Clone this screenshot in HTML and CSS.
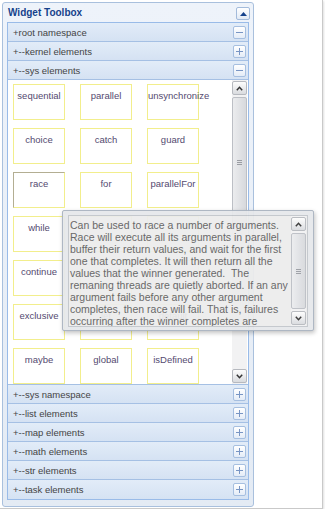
FILE: index.html
```html
<!DOCTYPE html>
<html lang="en">
<head>
    <meta charset="UTF-8">
    <title>Widget Toolbox</title>
    <link rel="stylesheet" href="styles.css">
</head>
<body>

    <div class="frame">
        <div class="toolbox">
            <div class="toolbox-head">
                <span class="title">Widget Toolbox</span>
                <span class="head-btn">
                    <svg width="7" height="4" viewBox="0 0 7 4"><path d="M0 4 L3.5 0 L7 4 Z" fill="#15428b"/></svg>
                </span>
            </div>

            <div class="toolbox-body">
                <div class="section">+root namespace <span class="sec-btn minus"></span></div>
                <div class="section">+--kernel elements <span class="sec-btn plus"></span></div>
                <div class="section">+--sys elements <span class="sec-btn minus"></span></div>

                <div class="palette">
                    <div class="grid">
                        <div class="box">sequential</div>
                        <div class="box">parallel</div>
                        <div class="box">unsynchronize</div>
                        <div class="box">choice</div>
                        <div class="box">catch</div>
                        <div class="box">guard</div>
                        <div class="box active">race</div>
                        <div class="box">for</div>
                        <div class="box">parallelFor</div>
                        <div class="box">while</div>
                        <div class="box"></div>
                        <div class="box"></div>
                        <div class="box">continue</div>
                        <div class="box"></div>
                        <div class="box"></div>
                        <div class="box">exclusive</div>
                        <div class="box">let</div>
                        <div class="box">default</div>
                        <div class="box">maybe</div>
                        <div class="box">global</div>
                        <div class="box">isDefined</div>
                    </div>
                    <div class="vscroll">
                        <span class="sb-btn"><svg width="7" height="5" viewBox="0 0 7 5"><path d="M0.8 4.2 L3.5 1.3 L6.2 4.2" fill="none" stroke="#333" stroke-width="1.5"/></svg></span>
                        <span class="sb-thumb tall"><i></i><i></i><i></i></span>
                        <span class="sb-track"></span>
                        <span class="sb-btn"><svg width="7" height="5" viewBox="0 0 7 5"><path d="M0.8 0.8 L3.5 3.7 L6.2 0.8" fill="none" stroke="#333" stroke-width="1.5"/></svg></span>
                    </div>
                </div>

                <div class="section">+--sys namespace <span class="sec-btn plus"></span></div>
                <div class="section">+--list elements <span class="sec-btn plus"></span></div>
                <div class="section">+--map elements <span class="sec-btn plus"></span></div>
                <div class="section">+--math elements <span class="sec-btn plus"></span></div>
                <div class="section">+--str elements <span class="sec-btn plus"></span></div>
                <div class="section">+--task elements <span class="sec-btn plus"></span></div>
            </div>
        </div>

        <!-- tooltip for the hovered "race" widget -->
        <div class="tip">
            <div class="tip-area">
                <div class="tip-text">Can be used to race a number of arguments.<br>
Race will execute all its arguments in parallel,<br>
buffer their return values, and wait for the first<br>
one that completes. It will then return all the<br>
values that the winner generated.&nbsp; The<br>
remaning threads are quietly aborted. If an any<br>
argument fails before any other argument<br>
completes, then race will fail. That is, failures<br>
occurring after the winner completes are<br>
silently ignored.</div>
                <div class="vscroll">
                    <span class="sb-btn"><svg width="7" height="5" viewBox="0 0 7 5"><path d="M0.8 4.2 L3.5 1.3 L6.2 4.2" fill="none" stroke="#333" stroke-width="1.5"/></svg></span>
                    <span class="sb-thumb fill"><i></i><i></i><i></i></span>
                    <span class="sb-btn"><svg width="7" height="5" viewBox="0 0 7 5"><path d="M0.8 0.8 L3.5 3.7 L6.2 0.8" fill="none" stroke="#333" stroke-width="1.5"/></svg></span>
                </div>
            </div>
        </div>
    </div>

</body>
</html>
```

FILE: styles.css
```css
body {
    margin: 0;
    font-family: "Liberation Sans", Arial, sans-serif;
    background-color: #fff;
}
.frame {
    position: relative;
    width: 323px;
    height: 509px;
    padding: 2px;
    box-sizing: border-box;
    border-right: 1px solid #c9c9c9;
    border-bottom: 1px solid #c9c9c9;
    box-shadow: 1px 1px 2px rgba(0, 0, 0, 0.12);
}
.toolbox {
    width: 252px;
    border: 1px solid #a9c0dd;
    border-radius: 3px;
    background: linear-gradient(#eef3fa, #e4ebf4);
    padding: 0 4px 6px 4px;
    box-sizing: border-box;
}
.toolbox-head {
    height: 19px;
    display: flex;
    align-items: center;
    justify-content: space-between;
    padding: 0 0 0 1px;
}
.title {
    font-size: 10px;
    font-weight: bold;
    color: #15428b;
}
.head-btn {
    width: 12px;
    height: 11px;
    margin-right: -1px;
    margin-top: 2px;
    border: 1px solid #a3bbdb;
    border-radius: 2px;
    background: linear-gradient(#ffffff, #e2eaf5);
    display: flex;
    align-items: center;
    justify-content: center;
}
.toolbox-body {
    border: 1px solid #99bbe8;
    background-color: #fff;
}
.section {
    height: 18px;
    border-bottom: 1px solid #a5c0e4;
    background: linear-gradient(#e2ecf8, #d5e2f3);
    display: flex;
    align-items: center;
    justify-content: space-between;
    padding: 0 2px 0 5px;
    font-size: 9.5px;
    color: #444;
}
.section:last-child {
    border-bottom: none;
    height: 19px;
}
.sec-btn {
    position: relative;
    width: 11px;
    height: 11px;
    border: 1px solid #a6bfe0;
    border-radius: 2px;
    background: linear-gradient(#ffffff, #e4ecf7);
}
.sec-btn::before,
.sec-btn.plus::after {
    content: "";
    position: absolute;
    background-color: #7895c4;
}
.sec-btn::before {
    left: 2px;
    right: 2px;
    top: 5px;
    height: 1px;
}
.sec-btn.plus::after {
    top: 2px;
    bottom: 2px;
    left: 5px;
    width: 1px;
}
.palette {
    height: 304px;
    display: flex;
    border-bottom: 1px solid #a5c0e4;
    background-color: #fff;
}
.grid {
    flex: 1;
    overflow: hidden;
    padding: 4px 0 0 5px;
    display: grid;
    grid-template-columns: repeat(3, 52px);
    grid-auto-rows: 36px;
    column-gap: 15px;
    row-gap: 8px;
}
.box {
    border: 1px solid #f2ee8c;
    box-sizing: border-box;
    text-align: center;
    font-size: 9.5px;
    color: #544a70;
    padding-top: 5px;
    white-space: nowrap;
}
.box.active {
    border-color: #b3ae92 #f2ee8c #f2ee8c #b3ae92;
}
.vscroll {
    width: 15px;
    margin: 0 1px 0 0;
    padding: 1px 0;
    display: flex;
    flex-direction: column;
    gap: 2px;
    background-color: #f2f2f3;
}
.sb-btn {
    height: 12px;
    border: 1px solid #b6b9bf;
    border-radius: 2px;
    background: linear-gradient(#fdfdfd, #d9dbdf);
    display: flex;
    align-items: center;
    justify-content: center;
}
.sb-thumb {
    border: 1px solid #bcbfc5;
    border-radius: 2px;
    background: linear-gradient(to right, #ebecee, #d7d9dd);
    display: flex;
    flex-direction: column;
    align-items: center;
    justify-content: center;
    gap: 1px;
}
.sb-thumb i {
    width: 5px;
    height: 1px;
    background-color: #9a9da3;
}
.sb-thumb.tall {
    height: 128px;
}
.sb-thumb.fill {
    flex: 1;
}
.sb-track {
    flex: 1;
}
.tip {
    position: absolute;
    left: 62px;
    top: 210px;
    width: 252px;
    height: 121px;
    box-sizing: border-box;
    padding: 4px 5px 3px 5px;
    border: 1px solid #a9b3c0;
    border-radius: 2px;
    background-color: #e6e8eb;
    box-shadow: 1px 2px 4px rgba(0, 0, 0, 0.25);
    opacity: 0.94;
}
.tip-area {
    height: 100%;
    box-sizing: border-box;
    border: 1px solid #c2c6cb;
    background-color: #ececec;
    display: flex;
    overflow: hidden;
}
.tip-text {
    flex: 1;
    padding: 3px 0 0 1px;
    font-size: 10.5px;
    line-height: 12px;
    color: #5f5f5f;
    white-space: nowrap;
    overflow: hidden;
}
.tip-area .vscroll {
    margin-right: 1px;
}
```
